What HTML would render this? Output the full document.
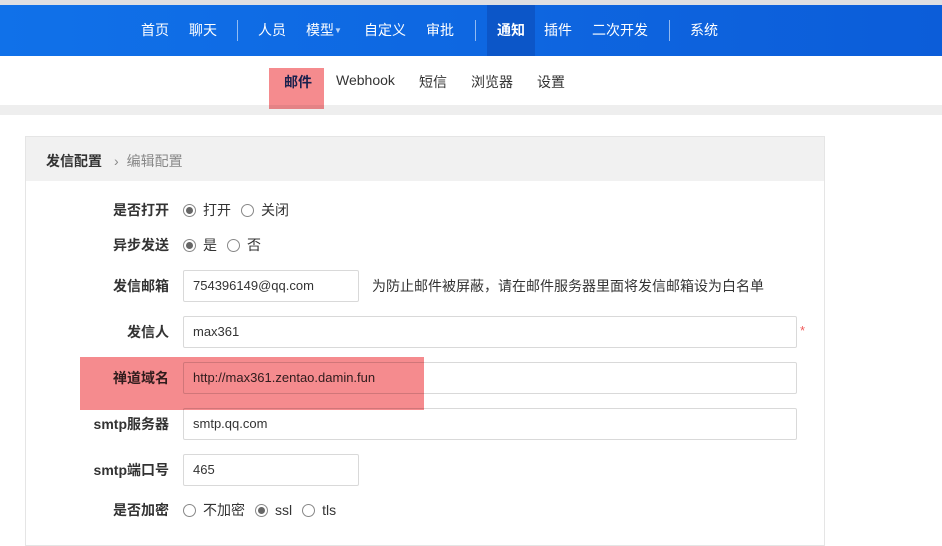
<!DOCTYPE html>
<html><head><meta charset="utf-8"><style>
*{margin:0;padding:0;box-sizing:border-box}
body{width:942px;height:534px;overflow:hidden;background:#fff;font-family:"Liberation Sans","Noto Sans CJK SC",sans-serif;font-size:13px;color:#333;position:relative}
.a{position:absolute}
.top{left:0;top:0;width:942px;height:5px;background:#dfdfe2}
.hd{left:0;top:5px;width:942px;height:51px;background:linear-gradient(90deg,#1071e9,#0c5dd9)}
.nv{top:5px;height:51px;line-height:51px;color:#fff;font-size:14px;white-space:nowrap}
.sep{top:20px;width:1px;height:21px;background:rgba(255,255,255,.55)}
.sub{top:72px;font-size:14px;color:#333}
.lab{font-weight:bold;text-align:right;right:773px;font-size:14px;color:#333;line-height:16px}
.inp{left:183px;height:32px;border:1px solid #d9d9d9;border-radius:2px;padding-left:9px;line-height:30px;font-size:13px;color:#333}
.rd{width:13px;height:13px;border:1px solid #888;border-radius:50%;display:inline-block;vertical-align:-2px;position:relative;margin-right:7px}
.rd.on::after{content:"";position:absolute;left:2px;top:2px;width:7px;height:7px;border-radius:50%;background:#666}
.rl{left:183px;font-size:14px;white-space:nowrap;line-height:16px}
.rl span.t{margin-right:10px}
.hl{background:#f58b8e;mix-blend-mode:multiply}
</style></head><body>
<div class="a top"></div>
<div class="a hd"></div>
<div class="a" style="left:487px;top:5px;width:48px;height:51px;background:#0c56c8"></div>
<div class="a nv" style="left:141px">首页</div>
<div class="a nv" style="left:189px">聊天</div>
<div class="a sep" style="left:237px"></div>
<div class="a nv" style="left:258px">人员</div>
<div class="a nv" style="left:306px">模型<span style="font-size:8px;opacity:.7;vertical-align:2px">▼</span></div>
<div class="a nv" style="left:364px">自定义</div>
<div class="a nv" style="left:426px">审批</div>
<div class="a sep" style="left:475px"></div>
<div class="a nv" style="left:497px;font-weight:bold">通知</div>
<div class="a nv" style="left:544px">插件</div>
<div class="a nv" style="left:592px">二次开发</div>
<div class="a sep" style="left:669px"></div>
<div class="a nv" style="left:690px">系统</div>

<div class="a sub" style="left:284px;font-weight:bold;color:#1a3a8a">邮件</div>
<div class="a sub" style="left:336px">Webhook</div>
<div class="a sub" style="left:419px">短信</div>
<div class="a sub" style="left:471px">浏览器</div>
<div class="a sub" style="left:537px">设置</div>
<div class="a" style="left:0;top:105px;width:942px;height:10px;background:#eee"></div>
<div class="a hl" style="left:269px;top:68px;width:55px;height:41px"></div>

<div class="a" style="left:25px;top:136px;width:800px;height:410px;border:1px solid #e5e5e5"></div>
<div class="a" style="left:26px;top:137px;width:798px;height:44px;background:#f1f1f1"></div>
<div class="a" style="left:46px;top:151px;font-weight:bold;font-size:14px;white-space:nowrap">发信配置<span style="font-weight:normal;color:#888;margin:0 8px 0 12px">›</span><span style="font-weight:normal;color:#888">编辑配置</span></div>

<div class="a lab" style="top:202px">是否打开</div>
<div class="a rl" style="top:202px"><i class="rd on"></i><span class="t">打开</span><i class="rd"></i>关闭</div>
<div class="a lab" style="top:237px">异步发送</div>
<div class="a rl" style="top:237px"><i class="rd on"></i><span class="t">是</span><i class="rd"></i>否</div>
<div class="a lab" style="top:278px">发信邮箱</div>
<div class="a inp" style="top:270px;width:176px">754396149@qq.com</div>
<div class="a" style="left:372px;top:278px;color:#333;font-size:14px;line-height:16px;white-space:nowrap">为防止邮件被屏蔽，请在邮件服务器里面将发信邮箱设为白名单</div>
<div class="a lab" style="top:324px">发信人</div>
<div class="a inp" style="top:316px;width:614px">max361</div>
<div class="a" style="left:800px;top:323px;color:#f05a5a">*</div>
<div class="a lab" style="top:370px">禅道域名</div>
<div class="a inp" style="top:362px;width:614px">http://max361.zentao.damin.fun</div>
<div class="a lab" style="top:416px">smtp服务器</div>
<div class="a inp" style="top:408px;width:614px">smtp.qq.com</div>
<div class="a lab" style="top:462px">smtp端口号</div>
<div class="a inp" style="top:454px;width:176px">465</div>
<div class="a lab" style="top:502px">是否加密</div>
<div class="a rl" style="top:502px"><i class="rd"></i><span class="t">不加密</span><i class="rd on"></i><span class="t">ssl</span><i class="rd"></i>tls</div>
<div class="a hl" style="left:80px;top:357px;width:344px;height:53px"></div>
</body></html>
